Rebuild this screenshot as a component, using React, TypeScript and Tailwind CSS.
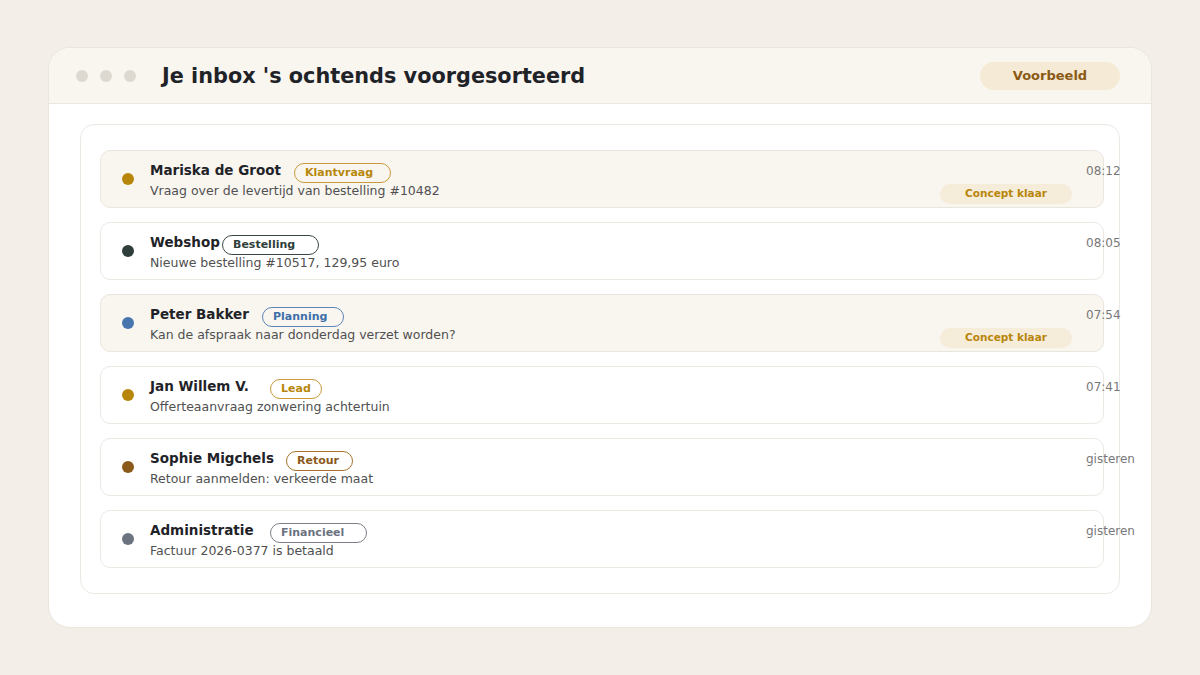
import React from "react";

type Row = {
  name: string;
  nameW: string;
  tag: string;
  tagCls: string;
  dot: string;
  subject: string;
  time: string;
  concept?: boolean;
};

const rows: Row[] = [
  {
    name: "Mariska de Groot",
    nameW: "w-[144px]",
    tag: "Klantvraag",
    tagCls: "w-[97px] border-[#c99a3c] text-[#b8860b]",
    dot: "bg-[#b8860b]",
    subject: "Vraag over de levertijd van bestelling #10482",
    time: "08:12",
    concept: true,
  },
  {
    name: "Webshop",
    nameW: "w-[72px]",
    tag: "Bestelling",
    tagCls: "w-[97px] border-[#3a4744] text-[#2f3e3a]",
    dot: "bg-[#2f3e3a]",
    subject: "Nieuwe bestelling #10517, 129,95 euro",
    time: "08:05",
  },
  {
    name: "Peter Bakker",
    nameW: "w-[112px]",
    tag: "Planning",
    tagCls: "w-[82px] border-[#5a84b8] text-[#3d6fa8]",
    dot: "bg-[#4676ad]",
    subject: "Kan de afspraak naar donderdag verzet worden?",
    time: "07:54",
    concept: true,
  },
  {
    name: "Jan Willem V.",
    nameW: "w-[120px]",
    tag: "Lead",
    tagCls: "w-[52px] border-[#c99a3c] text-[#b8860b]",
    dot: "bg-[#b8860b]",
    subject: "Offerteaanvraag zonwering achtertuin",
    time: "07:41",
  },
  {
    name: "Sophie Migchels",
    nameW: "w-[136px]",
    tag: "Retour",
    tagCls: "w-[67px] border-[#a7742e] text-[#8b5a1b]",
    dot: "bg-[#8b5a1b]",
    subject: "Retour aanmelden: verkeerde maat",
    time: "gisteren",
  },
  {
    name: "Administratie",
    nameW: "w-[120px]",
    tag: "Financieel",
    tagCls: "w-[97px] border-[#7a7f86] text-[#6b7280]",
    dot: "bg-[#6b7280]",
    subject: "Factuur 2026-0377 is betaald",
    time: "gisteren",
  },
];

export default function App() {
  return (
    <div className="h-[675px] w-[1200px] bg-[#f3eee7] pt-[47px] pl-[48px] font-['DejaVu_Sans',sans-serif]">
      <div className="flex h-[581px] w-[1104px] flex-col overflow-hidden rounded-[22px] border border-[#ebe5dc] bg-white">
        <div className="flex h-[56px] shrink-0 items-center border-b border-[#ebe6de] bg-[#f9f6f0] pl-[27px] pr-[31px]">
          <div className="flex gap-[12px]">
            <span className="h-[12px] w-[12px] rounded-full bg-[#ddd8d0]" />
            <span className="h-[12px] w-[12px] rounded-full bg-[#ddd8d0]" />
            <span className="h-[12px] w-[12px] rounded-full bg-[#ddd8d0]" />
          </div>
          <h1 className="ml-[26px] flex-1 text-[20.8px] font-bold leading-[24px] text-[#1f2328]">
            Je inbox 's ochtends voorgesorteerd
          </h1>
          <span className="flex h-[28px] w-[140px] items-center justify-center rounded-full bg-[#f5ead6] text-[13px] font-bold text-[#8a5a14]">
            Voorbeeld
          </span>
        </div>
        <div className="pl-[31px] pt-[20px]">
          <div className="flex h-[470px] w-[1040px] flex-col gap-[14px] rounded-[14px] border border-[#ece9e3] pl-[19px] pt-[25px]">
            {rows.map((r) => (
              <div
                key={r.name}
                className={`flex h-[58px] w-[1004px] shrink-0 rounded-[10px] border pl-[21px] pr-[17px] ${
                  r.concept ? "border-[#ebe6dd] bg-[#f9f6f0]" : "border-[#ece9e3] bg-white"
                }`}
              >
                <span className={`h-[12px] w-[12px] shrink-0 self-center rounded-full ${r.dot}`} />
                <div className="ml-[16px] mt-[2px] flex flex-1 flex-col self-center">
                  <div className="flex h-[21px] items-start">
                    <span className={`${r.nameW} shrink-0 whitespace-nowrap text-[13.5px] font-bold leading-[16px] text-[#1f2328]`}>
                      {r.name}
                    </span>
                    <span
                      className={`mt-px flex h-[20px] shrink-0 items-center rounded-full border pl-[10px] text-[11px] font-bold leading-none ${r.tagCls}`}
                    >
                      {r.tag}
                    </span>
                  </div>
                  <div className="whitespace-nowrap text-[12.5px] leading-[16px] text-[#505050]">{r.subject}</div>
                </div>
                <div className="flex w-[132px] shrink-0 items-end pb-[3px]">
                  {r.concept && (
                    <span className="flex h-[20px] w-[132px] items-center justify-center rounded-full bg-[#f5ecd9] text-[10.5px] font-bold text-[#b8860b]">
                      Concept klaar
                    </span>
                  )}
                </div>
                <div className="ml-[14px] w-0 pt-[7px]">
                  <span className="whitespace-nowrap text-[12px] leading-[16px] text-[#787878]">{r.time}</span>
                </div>
              </div>
            ))}
          </div>
        </div>
      </div>
    </div>
  );
}
